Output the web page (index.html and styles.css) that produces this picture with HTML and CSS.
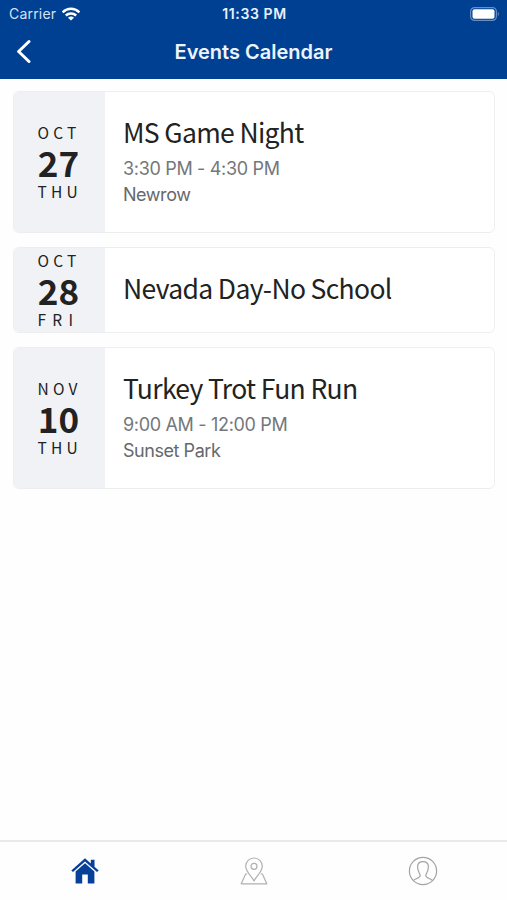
FILE: index.html
```html
<!DOCTYPE html>
<html lang="en">
<head>
    <meta charset="UTF-8">
    <meta name="viewport" content="width=device-width, initial-scale=1.0">
    <title>Events Calendar</title>
    <link rel="stylesheet" href="styles.css">
</head>
<body>
    <header>
        <div class="status-bar">
            <div class="carrier">
                <span>Carrier</span>
                <svg class="wifi" viewBox="0 0 18 14" width="18" height="14">
                    <g fill="none" stroke="#fff" stroke-width="2.5">
                        <path d="M.6 5.3C5.4.7 12.6.7 17.4 5.3"/>
                        <path d="M3.8 8.5C6.8 5.8 11.2 5.8 14.2 8.5"/>
                    </g>
                    <path d="M9 13.6L6 10.7C7.6 9.2 10.4 9.2 12 10.7Z" fill="#fff"/>
                </svg>
            </div>
            <div class="clock">11:33 PM</div>
            <svg class="battery" viewBox="0 0 30 14" width="30" height="14">
                <rect x=".6" y=".6" width="25.8" height="12.8" rx="4" fill="none" stroke="#668fc4" stroke-width="1.2"/>
                <rect x="2.5" y="2.3" width="22" height="9.4" rx="2" fill="#fff"/>
                <path d="M27.8 4.8Q30 7 27.8 9.2Z" fill="#668fc4"/>
            </svg>
        </div>
        <div class="nav-bar">
            <a href="#" class="back" aria-label="Back">
                <svg viewBox="0 0 16 26" width="16" height="26">
                    <path d="M14 2.5L3.6 12.5L14 22.5" fill="none" stroke="#fff" stroke-width="3" stroke-linecap="round" stroke-linejoin="round"/>
                </svg>
            </a>
            <h1>Events Calendar</h1>
        </div>
    </header>

    <main>
        <div class="event">
            <div class="date">
                <span class="label">OCT</span>
                <span class="day">27</span>
                <span class="label">THU</span>
            </div>
            <div class="details">
                <h2>MS Game Night</h2>
                <p class="time">3:30 PM - 4:30 PM</p>
                <p class="place">Newrow</p>
            </div>
        </div>
        <div class="event short">
            <div class="date">
                <span class="label">OCT</span>
                <span class="day">28</span>
                <span class="label wide">FRI</span>
            </div>
            <div class="details">
                <h2>Nevada Day-No School</h2>
            </div>
        </div>
        <div class="event">
            <div class="date">
                <span class="label">NOV</span>
                <span class="day">10</span>
                <span class="label">THU</span>
            </div>
            <div class="details">
                <h2>Turkey Trot Fun Run</h2>
                <p class="time">9:00 AM - 12:00 PM</p>
                <p class="place">Sunset Park</p>
            </div>
        </div>
    </main>

    <footer>
        <a href="#" aria-label="Home">
            <svg viewBox="0 0 28 26" width="28" height="26" fill="#07409a">
                <path d="M14 .3L.3 12.4L2 14.1L14 3.6L26 14.1L27.7 12.4L23.5 8.7V1.8H19.8V5.4Z"/>
                <path d="M14 5.3L4.6 13.6V25.4H11.2V16.5H16.8V25.4H23.4V13.6Z"/>
            </svg>
        </a>
        <a href="#" aria-label="Map">
            <svg viewBox="0 0 28 28" width="28" height="28" fill="none" stroke="#b0b0b0" stroke-width="1.2" stroke-linejoin="round">
                <path d="M14 24C12 19.5 5.7 15 5.7 9.3A8.3 8.3 0 0 1 22.3 9.3C22.3 15 16 19.5 14 24Z"/>
                <circle cx="14" cy="9.3" r="3"/>
                <path d="M7.3 17H5.6L1.2 26.8H26.8L22.4 17H20.7"/>
            </svg>
        </a>
        <a href="#" aria-label="Profile">
            <svg viewBox="0 0 30 30" width="30" height="30" fill="none" stroke="#a3a3a3" stroke-width="1.2">
                <circle cx="15" cy="15" r="13.6"/>
                <path d="M5.4 24.6C7 22.2 12.2 22.4 12.2 19.6C12.2 17.6 9.6 16 9.6 10.8C9.6 7.4 11.8 5.6 15 5.6S20.4 7.4 20.4 10.8C20.4 16 17.8 17.6 17.8 19.6C17.8 22.4 23 22.2 24.6 24.6"/>
            </svg>
        </a>
    </footer>
</body>
</html>
```
FILE: styles.css
```css
/* Basic Styling */
* {
    box-sizing: border-box;
}

body {
    font-family: Inter, "Liberation Sans", sans-serif;
    margin: 0;
    height: 900px;
    display: flex;
    flex-direction: column;
    color: #222;
    background-color: #fefefe;
}

h1, h2, p {
    margin: 0;
    font-weight: normal;
}

svg {
    display: block;
}

/* Header */
header {
    height: 79px;
    background-color: #004093;
    color: #fff;
}

.status-bar {
    display: grid;
    grid-template-columns: 1fr auto 1fr;
    align-items: center;
    height: 27px;
    padding: 0 7px 0 9px;
}

.carrier {
    display: flex;
    align-items: center;
    gap: 6px;
    font-size: 14px;
    letter-spacing: 0.2px;
    color: #d5e2f4;
}

.clock {
    font-size: 14px;
    font-weight: 600;
    letter-spacing: 0.6px;
    color: #e8f0fb;
}

.battery {
    justify-self: end;
}

.nav-bar {
    display: grid;
    grid-template-columns: 40px 1fr 40px;
    align-items: center;
    height: 50px;
}

.back {
    padding-left: 15px;
}

h1 {
    font-size: 20px;
    font-weight: 600;
    text-align: center;
    color: #edf4fd;
}

/* Events */
main {
    flex: 1;
    display: flex;
    flex-direction: column;
    gap: 14px;
    padding: 12px 12px 0 13px;
}

.event {
    display: flex;
    height: 142px;
    border: 1px solid #eeeef0;
    border-radius: 6px;
    background-color: #fff;
    overflow: hidden;
}

.event.short {
    height: 86px;
}

.date {
    width: 91px;
    display: flex;
    flex-direction: column;
    justify-content: center;
    align-items: center;
    padding-bottom: 2px;
    background-color: #f1f2f6;
    font-family: "Noto Sans CJK SC", sans-serif;
}

.label {
    width: 44px;
    font-size: 15.5px;
    line-height: 22px;
    letter-spacing: 4.2px;
    white-space: nowrap;
}

.label.wide {
    letter-spacing: 6.3px;
}

.day {
    margin-right: 2px;
    font-size: 35px;
    font-weight: bold;
    line-height: 37px;
}

.details {
    display: flex;
    flex-direction: column;
    justify-content: center;
    padding-left: 18px;
}

h2 {
    margin-bottom: 5px;
    font-family: "Noto Sans CJK SC", sans-serif;
    font-size: 26.5px;
    line-height: 34px;
    letter-spacing: -0.65px;
}

.event:not(.short) h2 {
    margin-top: -2px;
    margin-bottom: 7px;
}

.short h2 {
    margin-bottom: 4px;
}

.time,
.place {
    font-size: 18px;
    line-height: 26px;
    letter-spacing: -0.32px;
    color: #73777b;
}

.place {
    letter-spacing: -0.45px;
    color: #66686b;
}

/* Tab bar */
footer {
    display: grid;
    grid-template-columns: repeat(3, 1fr);
    justify-items: center;
    align-items: center;
    height: 60px;
    border-top: 2px solid #e9e9e9;
}
```
